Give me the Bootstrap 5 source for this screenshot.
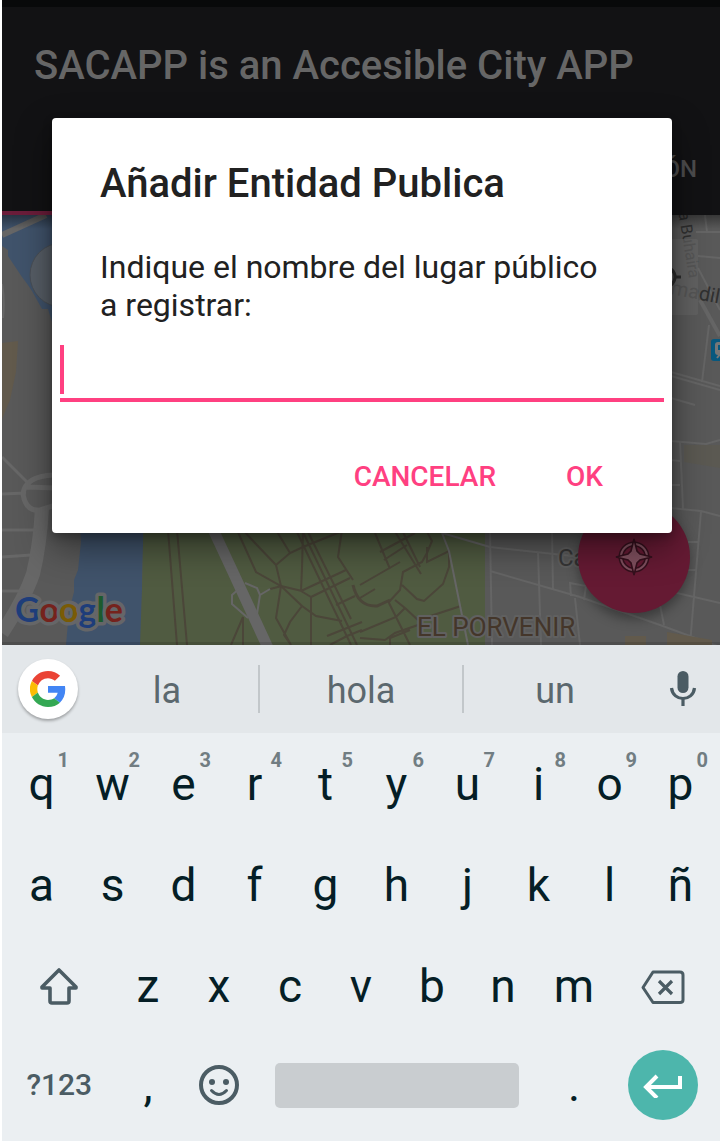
<!DOCTYPE html>
<html lang="es">
<head>
<meta charset="utf-8">
<meta name="viewport" content="width=device-width, initial-scale=1">
<title>SACAPP</title>
<link href="https://cdn.jsdelivr.net/npm/bootstrap@5.3.0/dist/css/bootstrap.min.css" rel="stylesheet">
<style>
  body { font-family: Roboto, "Liberation Sans", sans-serif; background: #fff; }
  button { border: 0; background: none; padding: 0; color: inherit; }
  .weight-500 { font-weight: 500; }
  .phone { margin-left: 2px; }
  .statusbar { height: 7px; background: #08090a; }
  .appbar { background: #121214; color: #666; }
  .appbar h1 { font-size: 40px; line-height: 48px; padding: 35px 32px 0; }
  .tabs { height: 125px; padding: 0 23px 24px; }
  .tabs::after { content: ""; position: absolute; left: 0; bottom: 0; width: 50%; height: 4px; background: #6b1d3a; }
  .tabs a { font-size: 24px; color: #4d4d4e; }
  .map-area { height: 430px; background: #595959; }
  .map-area > svg { width: 100%; height: 100%; }
  .fab { right: 30px; bottom: 32px; width: 112px; height: 112px; background: #651a33; box-shadow: 0 6px 12px rgba(0,0,0,.35); }
  .dialog-box { top: 118px; left: 50px; right: 48px; border-radius: 4px; background: #fff; color: #212121; padding: 40px 8px 20px; box-shadow: 0 14px 36px rgba(0,0,0,.45), 0 4px 10px rgba(0,0,0,.25); }
  .dialog-box h2 { font-size: 40px; line-height: 52px; margin: 0 40px 38px; }
  .dialog-box label { font-size: 32px; line-height: 38px; margin: 0 64px 18px 40px; }
  .name-field { width: 100%; height: 60px; border: 0; border-bottom: 4px solid #ff4081; border-radius: 0; outline: 0; padding: 0 8px; font-size: 36px; background: transparent; }
  .caret { left: 0; top: 3px; width: 4px; height: 49px; background: #ff4081; }
  .actions { padding-right: 45px; margin-top: 39px; gap: 38px; }
  .actions button { color: #ff4081; font-size: 28px; line-height: 72px; padding: 0 16px; }
  .keyboard { background: #ebeff2; color: #051e26; }
  .suggest { height: 88px; background: #e3e7ea; color: #5b686e; }
  .suggest .word { font-size: 36px; line-height: 44px; padding-top: 4px; flex: 9 1 0; }
  .suggest .middle { flex-grow: 10; border-left: 2px solid #c2c7ca; border-right: 2px solid #c2c7ca; }
  .edge { width: 74px; }
  .gbtn { width: 60px; height: 60px; margin-left: 16px; background: #fff; box-shadow: 0 2px 3px rgba(0,0,0,.3); }
  .keys { padding: 0 4px 7px; }
  .krow { height: 101px; }
  .krow:last-child { height: 98px; }
  .key { flex: 2 1 0; min-width: 0; font-size: 46px; line-height: 60px; }
  .key.wide { flex-grow: 3; }
  .key.bar { flex-grow: 8; }
  .key.bar span { display: block; height: 45px; margin: 0 20px; border-radius: 5px; background: #c9cdd0; }
  .hint { right: 8px; top: 17px; font-size: 20px; line-height: 20px; color: #717d82; }
  .symbols { font-size: 30px; color: #4b5c64; }
  .enter { width: 70px; height: 70px; background: #4db6ac; }
</style>
</head>
<body>
<div class="phone position-relative">
  <div class="statusbar"></div>
  <header class="appbar">
    <h1 class="weight-500 m-0">SACAPP is an Accesible City APP</h1>
    <nav class="tabs d-flex justify-content-end align-items-end position-relative">
      <a href="#" class="text-decoration-none pb-1 weight-500">INFORMACIÓN</a>
    </nav>
  </header>

  <main class="map-area position-relative overflow-hidden">
    <svg class="d-block" viewBox="2 215 718 430" preserveAspectRatio="xMidYMid slice" role="img" aria-label="Mapa">
      <defs>
        <linearGradient id="topshade" x1="0" y1="0" x2="0" y2="1"><stop offset="0" stop-color="#000" stop-opacity=".38"/><stop offset="1" stop-color="#000" stop-opacity="0"/></linearGradient>
      </defs>
      <rect x="2" y="215" width="718" height="430" fill="#595959"/>
      <!-- river -->
      <path d="M2 215H150V360H60L52 322L48 309H42L32 291L28 285L22 277L8 256V250L2 246Z" fill="#40536b"/>
      <path d="M2 235L46 215" stroke="#666" stroke-width="6"/>
      <path d="M78 500L81 542L78 570L74 580V592L69 611L66 645H141L142 590L144 500Z" fill="#40536b"/>
      <path d="M2 343L18 341L16 372L10 400L2 419Z" fill="#625a4c"/>
      <!-- park -->
      <path d="M144 500H485V645H140L142 590Z" fill="#505b41"/>
      <!-- western roads -->
      <g fill="none" stroke="#676767">
        <path d="M2 284Q5 300 3 318" stroke-width="2"/>
        <path d="M2 457L30 485M2 494L26 493" stroke-width="3"/>
        <path d="M54 475Q25 476 23 494Q26 512 40 510L56 505M26 487L56 488" stroke-width="5"/>
        <path d="M42 508Q40 545 33 574Q24 600 2 633" stroke-width="14"/>
        <path d="M2 530H36M2 557L31 555M2 591H25" stroke-width="3"/>
      </g>
      <!-- park paths -->
      <g fill="none" stroke="#4b4639" stroke-width="2">
        <path d="M168 530L177 645M177 530L187 645M237 530L256 572L281 586L302 591M243 530L255 543L276 565M276 530L290 553M303 530L302 568L301 591M296 530L351 645M302 530L357 645M307 530L351 619M276 565L290 553L303 547L345 530M276 565L281 586L276 618L291 645M281 586L302 606L316 616L342 621M301 591L311 597V645M302 606L290 622L284 635L291 645M301 591L346 570M311 597L350 578M342 530L338 557L353 580M336 605L355 596M327 636L362 622"/>
        <path d="M375 533L390 569M380 552L415 533M384 560L407 545M394 530L421 574M402 530L420 567M426 530L432 541L427 553L422 562L403 572L400 590L388 603M360 585L400 562M427 547L427 562L449 551L449 567L443 584L424 601L417 599L402 585M389 603L410 645M395 600L405 608L418 620L461 606M360 632L396 617L405 608M360 638L385 640L395 633L418 625M360 598L375 589M390 645V638L410 630"/>
        <path d="M353 585Q358 607 377 606L390 600" stroke-width="3"/>
        <path d="M330 645L347 636L362 630M243 617L231 645M243 617V645M270 589L282 586"/>
      </g>
      <g fill="none" stroke="#666">
        <path d="M211 525L232 570L269 650" stroke-width="11"/>
        <path d="M245 583L257 588L260 595L257 614M248 618L232 604V595L240 588M260 595L270 589" stroke-width="2"/>
        <path d="M442 533L449 551L468 645M442 533L490 547L600 559" stroke-width="2"/>
      </g>
      <!-- eastern streets -->
      <g fill="none" stroke="#656565" stroke-width="3">
        <path d="M490 530L492 645M552 530L553 590M538 552L541 645M490 571L580 597L660 625L720 647M571 596L570 583L586 586L584 600M575 598L580 645M664 590L720 603M701 511L690 645M640 505L701 511L720 516M688 542H698M688 570H697M660 605L664 625" stroke-width="2"/>
        <path d="M671 372L720 386M671 376L720 390M671 398L695 405M671 441L706 444L720 440M680 441L683 509M671 460L680 461M671 485H680M709 325L702 382M696 232H720M705 215L707 232M698 256L720 258M698 268L720 310" stroke-width="2"/>
        <path d="M700 300L720 336" stroke-width="4"/>
      </g>
      <path d="M684 445H720V468L684 462Z" fill="#5b5952"/>
      <path d="M625 636H646V645H625ZM667 632L712 640V645H667Z" fill="#625a4c"/>
      <!-- map controls -->
      <circle cx="62" cy="275" r="32" fill="#575e66" stroke="#494f56" stroke-width="1"/>
      <g font-family="Roboto, sans-serif" fill="#303030">
        <text transform="translate(678 209) rotate(81)" font-size="16">la Buhaira</text>
        <text transform="translate(670 294) rotate(11)" font-size="20">madilla</text>
      </g>
      <path d="M622 239H696Q698 239 698 241V313Q698 315 696 315H622Z" fill="#646464" fill-opacity=".72"/>
      <g fill="none" stroke="#2c2c2c" stroke-width="3"><circle cx="665" cy="277" r="10"/><path d="M675 277H681"/></g>
      <g><rect x="711" y="339" width="22" height="22" rx="3" fill="#07587e"/><rect x="715" y="342" width="14" height="13" rx="3" fill="#777"/><path d="M718 345H726V350H718Z" fill="#07587e"/><path d="M717 358L720 354" stroke="#777" stroke-width="2"/></g>
      <g font-family="Roboto, sans-serif" paint-order="stroke" stroke="#606060" stroke-width="4" stroke-linejoin="round">
        <text x="558" y="566" font-size="24" fill="#363636">Ca</text>
        <text x="417" y="636" font-size="26" fill="#44362a">EL PORVENIR</text>
      </g>
      <text x="15" y="622" font-family="Lato, sans-serif" font-size="34" font-weight="700" paint-order="stroke" stroke="#656668" stroke-width="7" stroke-linejoin="round"><tspan fill="#1e3d7a">G</tspan><tspan fill="#75221c">o</tspan><tspan fill="#7a5b05">o</tspan><tspan fill="#1e3d7a">g</tspan><tspan fill="#1c5a2d">l</tspan><tspan fill="#75221c">e</tspan></text>
      <rect x="2" y="215" width="718" height="14" fill="url(#topshade)"/>
      <rect x="2" y="642" width="718" height="3" fill="#000" opacity=".12"/>
    </svg>
    <button class="fab position-absolute rounded-circle" aria-label="Añadir lugar">
      <svg width="40" height="40" viewBox="-20 -20 40 40" class="d-block mx-auto">
        <circle r="13" fill="none" stroke="#35101d" stroke-width="5"/>
        <circle r="13" fill="none" stroke="#80505f" stroke-width="2"/>
        <path d="M0-18L3-6L6-3L18 0L6 3L3 6L0 18L-3 6L-6 3L-18 0L-6-3L-3-6Z" fill="#80505f" stroke="#35101d" stroke-width="1.6"/>
      </svg>
    </button>
  </main>

  <section class="keyboard" aria-label="Teclado">
    <div class="suggest d-flex align-items-center">
      <div class="edge flex-shrink-0">
        <button class="gbtn rounded-circle d-flex align-items-center justify-content-center" aria-label="Google">
          <svg width="36" height="36" viewBox="0 0 48 48"><path fill="#ea4335" d="M24 9.500c3.500 0 6.700 1.200 9.200 3.600l6.900-6.900C35.900 2.400 30.500 0 24 0 14.600 0 6.500 5.400 2.600 13.200l8 6.200C12.400 13.700 17.700 9.500 24 9.500z"/><path fill="#4285f4" d="M47 24.600c0-1.600-.2-3.100-.4-4.600H24v9h12.900c-.6 3-2.300 5.500-4.800 7.200l7.700 6C44.400 38 47 31.800 47 24.600z"/><path fill="#fbbc05" d="M10.500 28.600a14.500 14.500 0 0 1 0-9.200l-8-6.200a24 24 0 0 0 0 21.600z"/><path fill="#34a853" d="M24 48c6.500 0 11.900-2.100 15.900-5.800l-7.700-6c-2.200 1.400-4.900 2.300-8.200 2.300-6.300 0-11.600-4.200-13.500-9.900l-8 6.200C6.500 42.600 14.600 48 24 48z"/></svg>
        </button>
      </div>
      <button class="word">la</button>
      <button class="word middle">hola</button>
      <button class="word">un</button>
      <button class="edge flex-shrink-0" aria-label="Dictado por voz">
        <svg width="28" height="36" viewBox="0 0 28 36" class="d-block mx-auto"><rect x="8.500" y="0" width="11" height="22" rx="5.500" fill="#4b5c64"/><path d="M2.500 17C4 31 24 31 25.500 17M14 28V35" fill="none" stroke="#4b5c64" stroke-width="3.200"/></svg>
      </button>
    </div>

    <div class="keys">
      <div class="krow d-flex align-items-stretch">
        <button class="key position-relative">q<span class="hint position-absolute fw-bold">1</span></button>
        <button class="key position-relative">w<span class="hint position-absolute fw-bold">2</span></button>
        <button class="key position-relative">e<span class="hint position-absolute fw-bold">3</span></button>
        <button class="key position-relative">r<span class="hint position-absolute fw-bold">4</span></button>
        <button class="key position-relative">t<span class="hint position-absolute fw-bold">5</span></button>
        <button class="key position-relative">y<span class="hint position-absolute fw-bold">6</span></button>
        <button class="key position-relative">u<span class="hint position-absolute fw-bold">7</span></button>
        <button class="key position-relative">i<span class="hint position-absolute fw-bold">8</span></button>
        <button class="key position-relative">o<span class="hint position-absolute fw-bold">9</span></button>
        <button class="key position-relative">p<span class="hint position-absolute fw-bold">0</span></button>
      </div>
      <div class="krow d-flex align-items-stretch">
        <button class="key">a</button><button class="key">s</button><button class="key">d</button><button class="key">f</button><button class="key">g</button><button class="key">h</button><button class="key">j</button><button class="key">k</button><button class="key">l</button><button class="key">ñ</button>
      </div>
      <div class="krow d-flex align-items-stretch">
        <button class="key wide" aria-label="Mayúsculas">
          <svg width="40" height="40" viewBox="0 0 40 40" class="d-block mx-auto"><path d="M20 4L3 21V22H11V35Q11 37 13 37H28Q30 37 30 35V22H37V21Z" fill="none" stroke="#4b5c64" stroke-width="3.600" stroke-linejoin="round"/></svg>
        </button>
        <button class="key">z</button><button class="key">x</button><button class="key">c</button><button class="key">v</button><button class="key">b</button><button class="key">n</button><button class="key">m</button>
        <button class="key wide" aria-label="Borrar">
          <svg width="44" height="36" viewBox="0 0 44 36" class="d-block mx-auto"><path d="M12 4H39Q42 4 42 7V32Q42 34.500 39 34.500H12L2 19.500Z" fill="none" stroke="#4b5c64" stroke-width="3" stroke-linejoin="round"/><path d="M18 13L31 26M31 13L18 26" stroke="#4b5c64" stroke-width="3.200" fill="none"/></svg>
        </button>
      </div>
      <div class="krow d-flex align-items-stretch">
        <button class="key wide symbols weight-500">?123</button>
        <button class="key">,</button>
        <button class="key" aria-label="Emojis">
          <svg width="40" height="40" viewBox="0 0 40 40" class="d-block mx-auto"><circle cx="20" cy="20" r="18" fill="none" stroke="#4b5c64" stroke-width="4"/><circle cx="13" cy="17" r="3" fill="#4b5c64"/><circle cx="27" cy="17" r="3" fill="#4b5c64"/><path d="M12.500 25.500Q20 33.500 27.500 25.500" fill="none" stroke="#4b5c64" stroke-width="3" stroke-linecap="round"/></svg>
        </button>
        <button class="key bar" aria-label="Espacio"><span></span></button>
        <button class="key">.</button>
        <button class="key wide" aria-label="Intro">
          <span class="enter rounded-circle d-flex mx-auto align-items-center justify-content-center">
            <svg width="40" height="26" viewBox="0 0 40 26"><path d="M37 4V15H4M14 4L3 15L14 26" fill="none" stroke="#fff" stroke-width="4"/></svg>
          </span>
        </button>
      </div>
    </div>
  </section>

  <form class="dialog-box position-absolute" role="dialog" aria-labelledby="dlg-title">
    <h2 id="dlg-title" class="weight-500">Añadir Entidad Publica</h2>
    <label for="place" class="d-block">Indique el nombre del lugar público a registrar:</label>
    <div class="position-relative">
      <input id="place" type="text" class="name-field d-block" autocomplete="off">
      <span class="caret position-absolute"></span>
    </div>
    <div class="actions d-flex justify-content-end">
      <button type="button" class="weight-500">CANCELAR</button>
      <button type="submit" class="weight-500">OK</button>
    </div>
  </form>
</div>
<script src="https://cdn.jsdelivr.net/npm/bootstrap@5.3.0/dist/js/bootstrap.bundle.min.js"></script>
</body>
</html>
